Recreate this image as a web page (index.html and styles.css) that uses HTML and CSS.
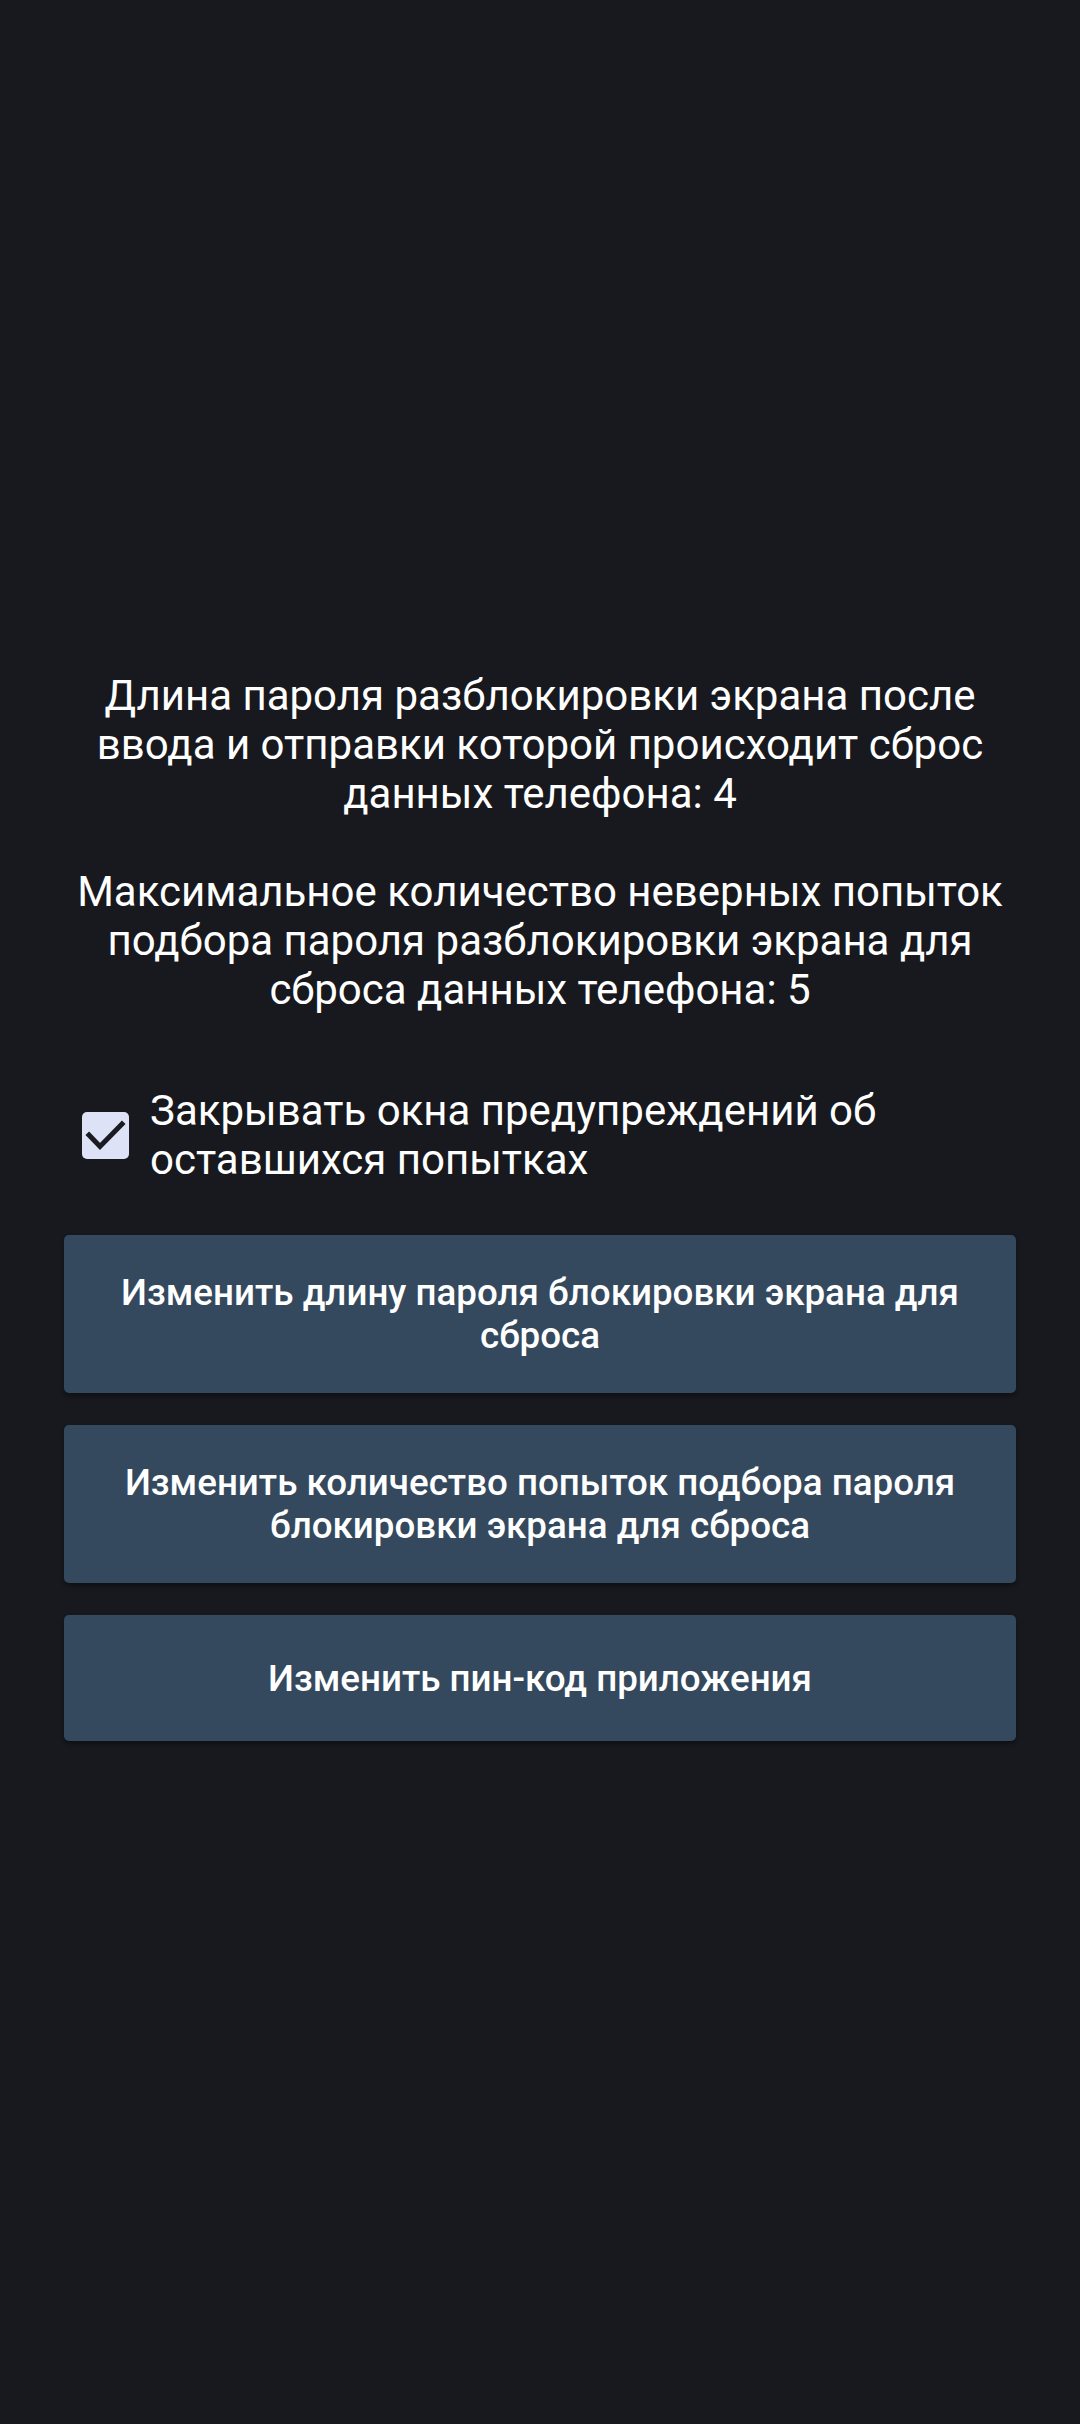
FILE: index.html
```html
<!DOCTYPE html>
<html lang="ru">
<head>
<meta charset="utf-8">
<title>Настройки</title>
<link rel="stylesheet" href="styles.css">
</head>
<body>
<main class="screen">
  <p class="info">Длина пароля разблокировки экрана после ввода и отправки которой происходит сброс данных телефона: 4</p>
  <p class="info info-second">Максимальное количество неверных попыток подбора пароля разблокировки экрана для сброса данных телефона: 5</p>
  <label class="check-row">
    <span class="check-box">
      <svg viewBox="0 0 47 47" width="47" height="47" aria-hidden="true">
        <polyline points="7,23 18,34.5 40,12" fill="none" stroke="#1b1c21" stroke-width="5" stroke-linecap="square" stroke-linejoin="miter"/>
      </svg>
    </span>
    <span class="check-label">Закрывать окна предупреждений об оставшихся попытках</span>
  </label>
  <div class="actions">
    <button class="action">Изменить длину пароля блокировки экрана для сброса</button>
    <button class="action">Изменить количество попыток подбора пароля блокировки экрана для сброса</button>
    <button class="action">Изменить пин-код приложения</button>
  </div>
</main>
</body>
</html>
```

FILE: styles.css
```css
html, body {
  margin: 0;
  padding: 0;
}
body {
  background: #18191e;
  color: #ffffff;
  font-family: Roboto, "Noto Sans", "Liberation Sans", sans-serif;
  width: 1080px;
  height: 2424px;
  overflow: hidden;
}
.screen {
  box-sizing: border-box;
  padding: 671px 64px 0 64px;
  display: flex;
  flex-direction: column;
}
.info {
  margin: 0;
  font-size: 42px;
  line-height: 49px;
  text-align: center;
  font-weight: 400;
}
.info-second {
  margin-top: 49px;
}
.check-row {
  margin-top: 72px;
  display: flex;
  align-items: center;
}
.check-box {
  flex: none;
  width: 47px;
  height: 47px;
  margin-left: 18px;
  border-radius: 5px;
  background: #dee2f6;
  display: flex;
}
.check-label {
  margin-left: 21px;
  font-size: 42px;
  line-height: 49px;
}
.actions {
  margin-top: 51px;
  display: flex;
  flex-direction: column;
  gap: 32px;
}
.action {
  box-sizing: border-box;
  min-height: 126px;
  padding: 36px 42px;
  border: none;
  border-radius: 5px;
  background: #34495e;
  color: #ffffff;
  font-family: Roboto, "Noto Sans", "Liberation Sans", sans-serif;
  font-size: 36.75px;
  line-height: 43px;
  font-weight: 500;
  text-align: center;
  box-shadow: 0 3px 4px rgba(0, 0, 0, 0.35);
}
```
